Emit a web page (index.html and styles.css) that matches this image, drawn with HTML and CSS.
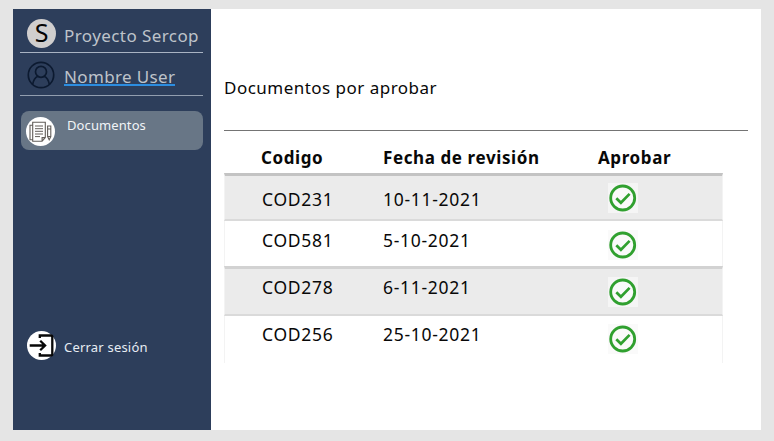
FILE: index.html
```html
<!DOCTYPE html>
<html lang="es">
<head>
<meta charset="utf-8">
<title>Proyecto Sercop</title>
<link rel="stylesheet" href="styles.css">
</head>
<body>
<svg class="defs" width="0" height="0" aria-hidden="true">
  <symbol id="check" viewBox="0 0 30 30">
    <circle cx="14.700" cy="15" r="12" fill="#fafafa" stroke="#30a02f" stroke-width="2.800"/>
    <path d="M8.300 15.300l4.600 4.500 8.700-8.900" fill="none" stroke="#30a02f" stroke-width="2.700"/>
  </symbol>
</svg>
<div class="app">
  <aside class="sidebar">
    <div class="brand">
      <span class="logo">S</span>
      <span class="brand-name">Proyecto Sercop</span>
    </div>
    <div class="user">
      <svg class="avatar" viewBox="0 0 28 28" fill="none" stroke="#0c1a30" stroke-width="1.700">
        <circle cx="14" cy="14" r="12.700"/>
        <circle cx="14" cy="10.800" r="5.500"/>
        <path d="M5.700 23.400c.6-4.200 3-7.200 5.300-8.200M22.300 23.400c-.6-4.200-3-7.200-5.300-8.200"/>
      </svg>
      <span class="user-name">Nombre User</span>
    </div>
    <nav class="menu">
      <a class="menu-item">
        <svg class="round-icon" viewBox="0 0 29 29">
          <circle cx="14.500" cy="14.500" r="14.500" fill="#fff"/>
          <g fill="none" stroke="#625d59" stroke-width="1.100">
            <path d="M6.700 5.200h12.600v15.400l-3.200 3.600H6.700zM19.300 20.600h-3.200v3.600M6.700 8.200H4v14.500h2.700"/>
            <path d="M9 9h8M9 11.700h8M9 14.300h8M9 17h8M9 19.600h5" stroke-width="1"/>
            <path d="M21.600 9h3.200v10.500l-1.600 3.300-1.600-3.300zM21.600 12h3.200M21.600 19.500h3.200"/>
          </g>
        </svg>
        <span>Documentos</span>
      </a>
    </nav>
    <a class="logout">
      <svg class="round-icon" viewBox="0 0 29 29">
        <circle cx="14.500" cy="14.500" r="14.500" fill="#fff"/>
        <g fill="none" stroke="#080808" stroke-width="2.300">
          <path d="M12.800 7V4.500h11q1.500 0 1.500 1.500v17q0 1.500-1.500 1.500h-11V22"/>
          <path d="M2.700 14.500h15.200M13.200 9.700l4.900 4.800-4.900 4.800"/>
        </g>
      </svg>
      <span>Cerrar sesión</span>
    </a>
  </aside>
  <main class="content">
    <h1 class="title">Documentos por aprobar</h1>
    <div class="table">
      <div class="head"><span class="h-code">Codigo</span><span class="h-date">Fecha de revisión</span><span class="h-ok">Aprobar</span></div>
      <div class="row shaded first"><span>COD231</span><span>10-11-2021</span><svg class="check"><use href="#check"/></svg></div>
      <div class="row second"><span>COD581</span><span>5-10-2021</span><svg class="check"><use href="#check"/></svg></div>
      <div class="row shaded third"><span>COD278</span><span>6-11-2021</span><svg class="check"><use href="#check"/></svg></div>
      <div class="row fourth"><span>COD256</span><span>25-10-2021</span><svg class="check"><use href="#check"/></svg></div>
    </div>
  </main>
</div>
</body>
</html>
```
FILE: styles.css
```css
* { box-sizing: border-box; }
body {
  margin: 0;
  padding: 9px 13px 11px;
  height: 441px;
  overflow: hidden;
  background: #e5e5e5;
  font-family: "Noto Sans", "Open Sans", sans-serif;
  color: #080808;
}
.defs { display: block; }
.app { display: flex; width: 748px; height: 421px; background: #fff; }

.sidebar {
  display: flex;
  flex-direction: column;
  width: 198px;
  padding: 0 8px 0 7px;
  background: #2d3e5b;
}
.brand, .user {
  display: flex;
  align-items: flex-start;
  border-bottom: 1px solid #a9b3c3;
  color: #bec3ca;
  font-size: 17px;
  line-height: 24px;
  white-space: nowrap;
}
.brand { height: 44px; padding: 10px 0 0 7px; }
.logo {
  width: 29px;
  height: 29px;
  border-radius: 50%;
  background: #d0cece;
  color: #050505;
  font-size: 25px;
  line-height: 27px;
  text-align: center;
}
.brand-name { margin: 5px 0 0 8px; letter-spacing: .42px; }
.user { height: 43px; padding: 8px 0 0 7px; border-bottom-color: #929eaf; }
.avatar { width: 28px; height: 28px; }
.user-name {
  height: 16px;
  margin: 8px 0 0 9px;
  box-shadow: 0 1px #2c8de0, inset 0 -1px #2c8de0;
  line-height: 16px;
  letter-spacing: .35px;
}
.menu { padding: 15px 0 0 1px; }
.menu-item {
  display: flex;
  width: 182px;
  height: 39px;
  padding: 5px 0 0 5px;
  border-radius: 8px;
  background: #687686;
  color: #f1f4f7;
  font-size: 13px;
  line-height: 18px;
}
.round-icon { width: 29px; height: 29px; flex: none; }
.menu-item span { margin-left: 12px; letter-spacing: .1px; }
.menu-item .round-icon { margin-top: 1px; }
.logout {
  display: flex;
  margin-top: 181px;
  padding-left: 7px;
  color: #e6ecf3;
  font-size: 13px;
  line-height: 18px;
}
.logout span { margin: 7px 0 0 8px; letter-spacing: .2px; }

.content { width: 550px; padding: 67px 13px 0; }
.title {
  height: 55px;
  margin: 0;
  border-bottom: 1px solid #747474;
  font-size: 17px;
  font-weight: 400;
  line-height: 24px;
  letter-spacing: .48px;
}
.table { width: 499px; }
.head, .row { display: grid; grid-template-columns: 121px 214px 1fr; padding-left: 37px; }
.head {
  height: 42px;
  padding-top: 15px;
  font-size: 17px;
  font-weight: 700;
  line-height: 24px;
  letter-spacing: .6px;
}
.h-date { padding-left: 1px; }
.h-ok { padding-left: 2px; }
.row {
  height: 47px;
  border-right: 1px solid #f3f3f3;
  border-left: 1px solid #f3f3f3;
  font-size: 17.5px;
  line-height: 24px;
  letter-spacing: .7px;
}
.shaded { background: #ebebeb; border-top: 3px solid #c3c3c3; border-bottom: 2px solid #dadada; }
.first { height: 48px; }
.first span { margin-top: 11px; }
.first .check { margin-top: 7px; }
.second { height: 45px; }
.second span { margin-top: 7px; }
.second .check { margin-top: 9px; }
.third { height: 50px; border-top-color: #d2d2d2; }
.third span { margin-top: 6px; }
.third .check { margin-top: 8px; }
.fourth span { margin-top: 6px; }
.fourth .check { margin-top: 8px; }
.check { display: block; width: 30px; height: 30px; margin-left: 11px; background: #f5f5f5; }
.second .check, .fourth .check { background: #fafafa; }
```
